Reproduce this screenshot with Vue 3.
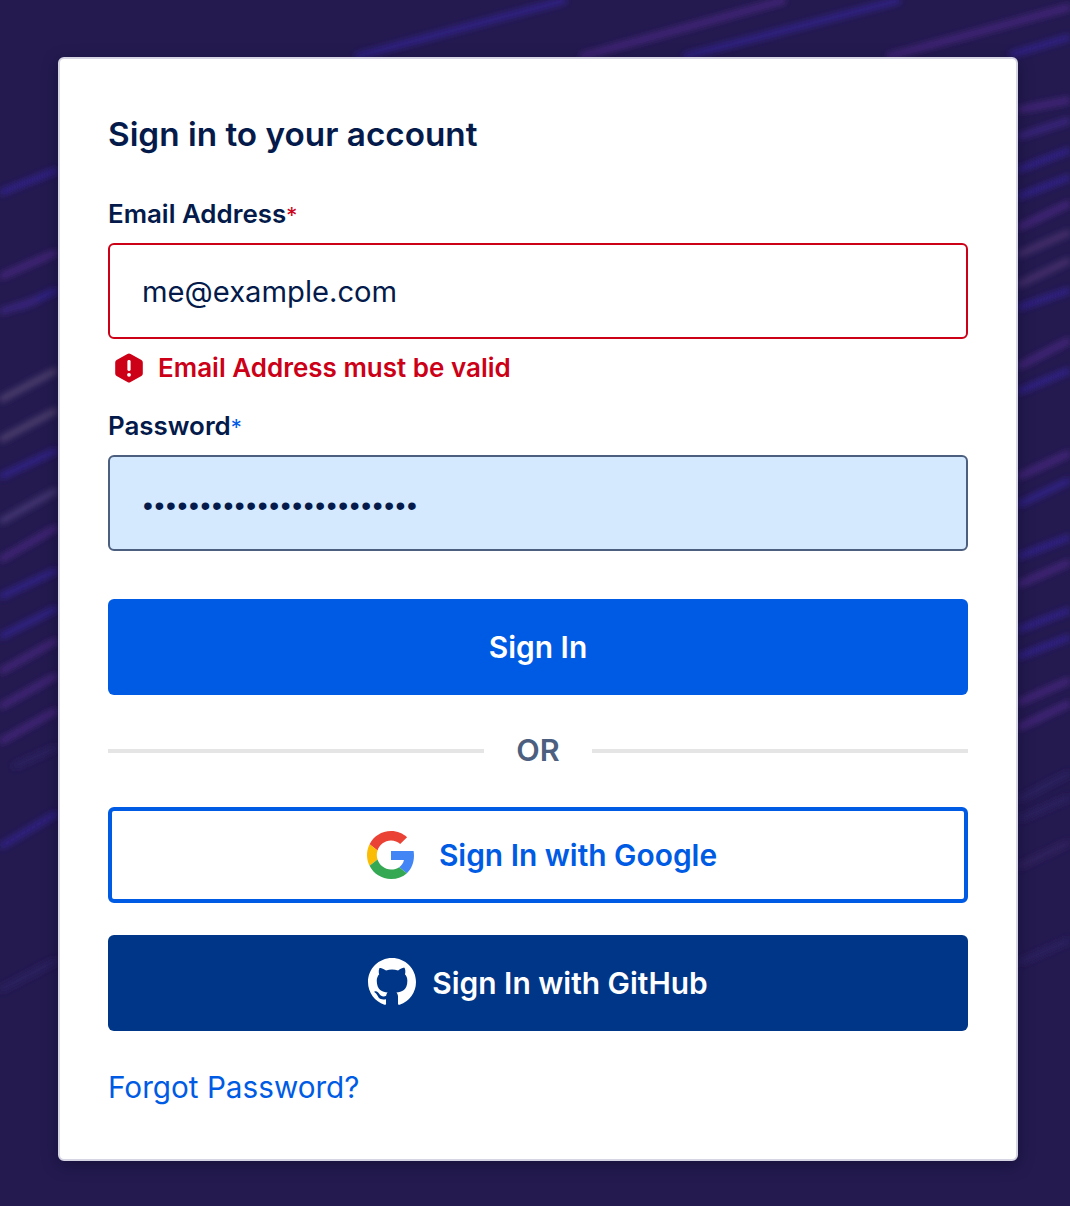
<script setup>
const blue = '#33248c'
const purple = '#46277f'
const grey = '#4f4270'
const faint = '#2c2060'
const streaks = [
  [0,193,57,170,blue],[0,277,57,252,purple],[20,307,57,290,blue],[0,312,37,300,'#3c2584'],
  [0,400,57,370,grey],[0,440,57,410,grey],[0,477,57,450,blue],[0,522,57,490,'#483a78'],
  [0,560,57,527,purple],[0,597,57,570,blue],[0,637,57,608,blue],[0,672,57,640,purple],
  [0,707,57,675,purple],[0,742,57,710,purple],[13,767,57,747,faint],[0,847,57,813,'#30228a'],
  [0,990,57,960,faint],
  [355,57,566,0,blue],[580,57,785,0,purple],[683,57,900,0,blue],[887,57,1070,7,purple],
  [1010,55,1070,37,blue],
  [1018,110,1070,100,purple],[1018,137,1070,120,'#3c2584'],[1018,170,1070,150,blue],[1018,197,1070,177,blue],
  [1018,228,1070,203,purple],[1018,255,1070,232,'#483270'],[1018,285,1070,260,'#483270'],[1018,308,1070,290,blue],
  [1018,367,1070,340,purple],[1018,392,1070,370,blue],[1018,477,1070,453,purple],[1018,505,1070,480,blue],
  [1018,557,1070,537,blue],[1018,585,1070,562,purple],[1018,630,1070,610,blue],[1018,657,1070,637,blue],
  [1018,703,1070,680,purple],[1018,728,1070,703,purple],[1018,800,1070,773,faint],[1018,820,1070,797,faint],
  [1018,867,1070,842,'#33225f'],[1018,963,1070,940,faint],
]
const dots = '•'.repeat(24)
</script>

<template>
  <div class="page">
    <svg class="streaks" width="1070" height="1206" viewBox="0 0 1070 1206" aria-hidden="true">
      <defs><filter id="soft" x="-20%" y="-20%" width="140%" height="140%"><feGaussianBlur stdDeviation="3" /></filter></defs>
      <g filter="url(#soft)">
        <line v-for="(s, i) in streaks" :key="i" :x1="s[0]" :y1="s[1]" :x2="s[2]" :y2="s[3]" :stroke="s[4]" stroke-width="6" />
      </g>
    </svg>
    <main class="card">
      <h1 class="title">Sign in to your account</h1>

      <div class="label">Email Address<span class="req-red">*</span></div>
      <div class="field field-error">me@example.com</div>
      <div class="error">
        <svg class="error-icon" viewBox="0 0 28 30" width="28" height="30" aria-hidden="true">
          <path d="M12.4.9 1.6 7.1A3 3 0 0 0 .2 9.6v10.8a3 3 0 0 0 1.4 2.5l10.8 6.2a3 3 0 0 0 3.2 0l10.8-6.2a3 3 0 0 0 1.4-2.5V9.6a3 3 0 0 0-1.4-2.5L15.6.9a3 3 0 0 0-3.2 0Z" fill="#cc0017"/>
          <rect x="12.4" y="7" width="3.2" height="11" rx="1.4" fill="#fff"/>
          <circle cx="14" cy="21.8" r="1.9" fill="#fff"/>
        </svg>
        <span class="error-text">Email Address must be valid</span>
      </div>

      <div class="label label-pass">Password<span class="req-blue">*</span></div>
      <div class="field field-filled"><span class="dots">{{ dots }}</span></div>

      <button class="btn btn-primary">Sign In</button>

      <div class="divider"><span class="rule"></span><span class="or">OR</span><span class="rule"></span></div>

      <button class="btn btn-google">
        <svg class="google" width="48" height="48" viewBox="0 0 48 48" aria-hidden="true">
          <path fill="#EA4335" d="M24 9.5c3.54 0 6.71 1.22 9.21 3.6l6.85-6.85C35.9 2.38 30.47 0 24 0 14.62 0 6.51 5.38 2.56 13.22l7.98 6.19C12.43 13.72 17.74 9.5 24 9.5z"/>
          <path fill="#4285F4" d="M46.98 24.55c0-1.57-.15-3.09-.38-4.55H24v9.02h12.94c-.58 2.96-2.26 5.48-4.78 7.18l7.73 6c4.51-4.18 7.09-10.36 7.09-17.65z"/>
          <path fill="#FBBC05" d="M10.53 28.59c-.48-1.45-.76-2.99-.76-4.59s.27-3.14.76-4.59l-7.98-6.19C.92 16.46 0 20.12 0 24c0 3.88.92 7.54 2.56 10.78l7.97-6.19z"/>
          <path fill="#34A853" d="M24 48c6.48 0 11.93-2.13 15.89-5.81l-7.73-6c-2.15 1.45-4.92 2.3-8.16 2.3-6.26 0-11.57-4.22-13.47-9.91l-7.98 6.19C6.51 42.62 14.62 48 24 48z"/>
        </svg>
        <span>Sign In with Google</span>
      </button>

      <button class="btn btn-github">
        <svg class="github" width="48" height="48" viewBox="0 0 16 16" aria-hidden="true">
          <path fill="#fff" d="M8 0C3.58 0 0 3.58 0 8c0 3.54 2.29 6.53 5.47 7.59.4.07.55-.17.55-.38 0-.19-.01-.82-.01-1.49-2.01.37-2.53-.49-2.69-.94-.09-.23-.48-.94-.82-1.13-.28-.15-.68-.52-.01-.53.63-.01 1.08.58 1.23.82.72 1.21 1.87.87 2.33.66.07-.52.28-.87.51-1.07-1.78-.2-3.64-.89-3.64-3.95 0-.87.31-1.59.82-2.15-.08-.2-.36-1.02.08-2.12 0 0 .67-.21 2.2.82.64-.18 1.32-.27 2-.27s1.36.09 2 .27c1.53-1.04 2.2-.82 2.2-.82.44 1.1.16 1.92.08 2.12.51.56.82 1.27.82 2.15 0 3.07-1.87 3.75-3.65 3.95.29.25.54.73.54 1.48 0 1.07-.01 1.93-.01 2.2 0 .21.15.46.55.38A8.01 8.01 0 0 0 16 8c0-4.42-3.58-8-8-8Z"/>
        </svg>
        <span>Sign In with GitHub</span>
      </button>

      <a class="forgot" href="#">Forgot Password?</a>
    </main>
  </div>
</template>

<style>
html, body { margin: 0; background: #231a4c; }
</style>

<style scoped>
.page {
  position: relative;
  width: 1070px;
  height: 1206px;
  box-sizing: border-box;
  padding: 57px 52px 0 58px;
  overflow: hidden;
  background: #241a50;
  font-family: Inter, Lato, sans-serif;
  color: #031a4a;
}
.streaks { position: absolute; inset: 0; }
.card {
  position: relative;
  box-sizing: border-box;
  width: 960px;
  height: 1104px;
  padding: 53px 48px 0;
  display: flex;
  flex-direction: column;
  background: #fff;
  border: 2px solid #d6d5e3;
  border-radius: 6px;
  box-shadow: 0 4px 16px rgba(8, 6, 30, 0.45);
}
.title {
  margin: 0;
  height: 44px;
  font-size: 33.3px;
  line-height: 44px;
  font-weight: 600;
}
.label {
  margin-top: 41px;
  height: 34px;
  font-size: 25.9px;
  line-height: 34px;
  font-weight: 600;
}
.label-pass { margin-top: 26px; }
.req-red { color: #cc0017; font-weight: 400; font-size: 22px; }
.req-blue { color: #005be4; font-weight: 400; font-size: 22px; }
.field {
  box-sizing: border-box;
  height: 96px;
  margin-top: 12px;
  padding: 0 32px;
  display: flex;
  align-items: center;
  border-radius: 6px;
  font-size: 29.2px;
  font-weight: 400;
}
.field-error { background: #fff; border: 2px solid #cc0017; }
.field-filled { background: #d4e8fe; border: 2px solid #4c5f7f; }
.dots {
  font-family: "Liberation Sans", sans-serif;
  font-size: 28px;
  letter-spacing: 1.68px;
  line-height: 1;
  margin: 6px 0 0 1px;
  color: #031a4a;
}
.error {
  margin-top: 14px;
  height: 30px;
  display: flex;
  align-items: center;
  gap: 15px;
  padding-left: 7px;
  color: #cc0017;
  font-size: 26px;
  font-weight: 600;
}
.error-text { margin-bottom: 2px; }
.error-icon { flex: none; }
.btn {
  box-sizing: border-box;
  display: flex;
  align-items: center;
  justify-content: center;
  width: 100%;
  height: 96px;
  border: 0;
  border-radius: 6px;
  font-family: inherit;
  font-size: 29.9px;
  font-weight: 600;
  padding: 0 0 1px;
}
.btn-primary { margin-top: 48px; background: #005be4; color: #fff; }
.divider {
  height: 32px;
  margin-top: 39px;
  display: flex;
  align-items: center;
  gap: 32px;
}
.rule { flex: 1; height: 4px; margin-top: 2px; background: #e5e5e5; }
.or { font-size: 30.5px; font-weight: 600; color: #4c5f7f; margin-bottom: 2px; }
.btn-google {
  margin-top: 41px;
  padding-left: 8px;
  background: #fff;
  border: 4px solid #005be4;
  color: #005be4;
  gap: 24px;
}
.google { margin-top: 1px; }
.btn-github { margin-top: 32px; background: #003687; color: #fff; gap: 16px; }
.github { margin-bottom: 1px; }
.forgot {
  margin-top: 38px;
  font-size: 29.7px;
  line-height: 36px;
  color: #005be4;
  text-decoration: none;
}
</style>
